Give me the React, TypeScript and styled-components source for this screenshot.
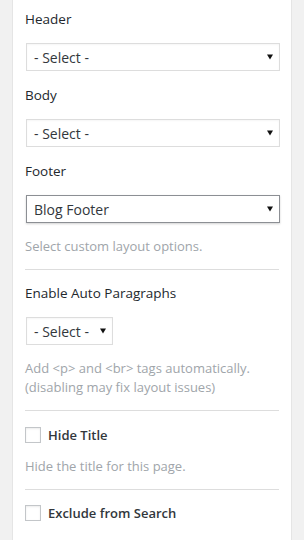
import styled, { createGlobalStyle } from "styled-components"

const GlobalStyle = createGlobalStyle`
  html, body {
    margin: 0;
    padding: 0;
    background: #f1f1f1;
    font-family: "Open Sans", "Liberation Sans", sans-serif;
  }
`

const Panel = styled.div`
  box-sizing: border-box;
  width: 280px;
  min-height: 540px;
  margin-left: 12px;
  padding: 0 12px;
  background: #fff;
  border-left: 1px solid #e5e5e5;
  border-right: 1px solid #e5e5e5;
`

const Section = styled.div<{ $top?: number; $last?: boolean }>`
  padding-top: ${props => props.$top ?? 15}px;
  padding-bottom: 13px;
  border-bottom: ${props => props.$last ? "none" : "1px solid #dddddd"};
`

const Field = styled.div`
  & + & {
    margin-top: 15px;
  }
`

const Label = styled.div`
  font-size: 13.5px;
  line-height: 18px;
  font-weight: 500;
  color: #23282d;
  margin-bottom: 15px;
`

const SelectBox = styled.div<{ $width?: number; $active?: boolean }>`
  box-sizing: border-box;
  display: flex;
  align-items: center;
  justify-content: space-between;
  height: 28px;
  width: ${props => props.$width ? `${props.$width}px` : "100%"};
  margin-left: 1px;
  padding: 0 6px 0 7px;
  border: 1px solid ${props => props.$active ? "#8c8f94" : "#dddddd"};
  box-shadow: ${props => props.$active ? "0 1px 2px rgba(0, 0, 0, .18)" : "inset 0 1px 2px rgba(0, 0, 0, .04)"};
  background: #fff;
  font-size: 14px;
  color: #32373c;
`

const Help = styled.div`
  margin-top: 14px;
  font-size: 13px;
  line-height: 19px;
  color: #a0a5aa;
`

const CheckRow = styled.label`
  display: flex;
  align-items: center;
  gap: 7px;
  height: 16px;
  font-size: 13px;
  font-weight: 600;
  color: #32373c;
`

const Box = styled.span`
  box-sizing: border-box;
  width: 16px;
  height: 16px;
  border: 1px solid #c3c6c9;
  background: #fff;
  box-shadow: inset 0 1px 2px rgba(0, 0, 0, .08);
`

const Arrow = () => (
  <svg width="6" height="6" viewBox="0 0 6 6">
    <path d="M0 0.5 H6 L3 5.5 Z" fill="#111" />
  </svg>
)

const Select = ({ value, width, active }: { value: string; width?: number; active?: boolean }) => (
  <SelectBox $width={width} $active={active}>
    <span>{value}</span>
    <Arrow />
  </SelectBox>
)

export default function App() {
  return (
    <>
      <GlobalStyle />
      <Panel>
        <Section $top={10}>
          <Field>
            <Label>Header</Label>
            <Select value="- Select -" />
          </Field>
          <Field>
            <Label>Body</Label>
            <Select value="- Select -" />
          </Field>
          <Field>
            <Label>Footer</Label>
            <Select value="Blog Footer" active />
          </Field>
          <Help>Select custom layout options.</Help>
        </Section>
        <Section $top={14}>
          <Label>Enable Auto Paragraphs</Label>
          <Select value="- Select -" width={87} />
          <Help>
            Add &lt;p&gt; and &lt;br&gt; tags automatically.
            <br />
            (disabling may fix layout issues)
          </Help>
        </Section>
        <Section $top={16}>
          <CheckRow>
            <Box />
            Hide Title
          </CheckRow>
          <Help>Hide the title for this page.</Help>
        </Section>
        <Section $last>
          <CheckRow>
            <Box />
            Exclude from Search
          </CheckRow>
        </Section>
      </Panel>
    </>
  )
}
